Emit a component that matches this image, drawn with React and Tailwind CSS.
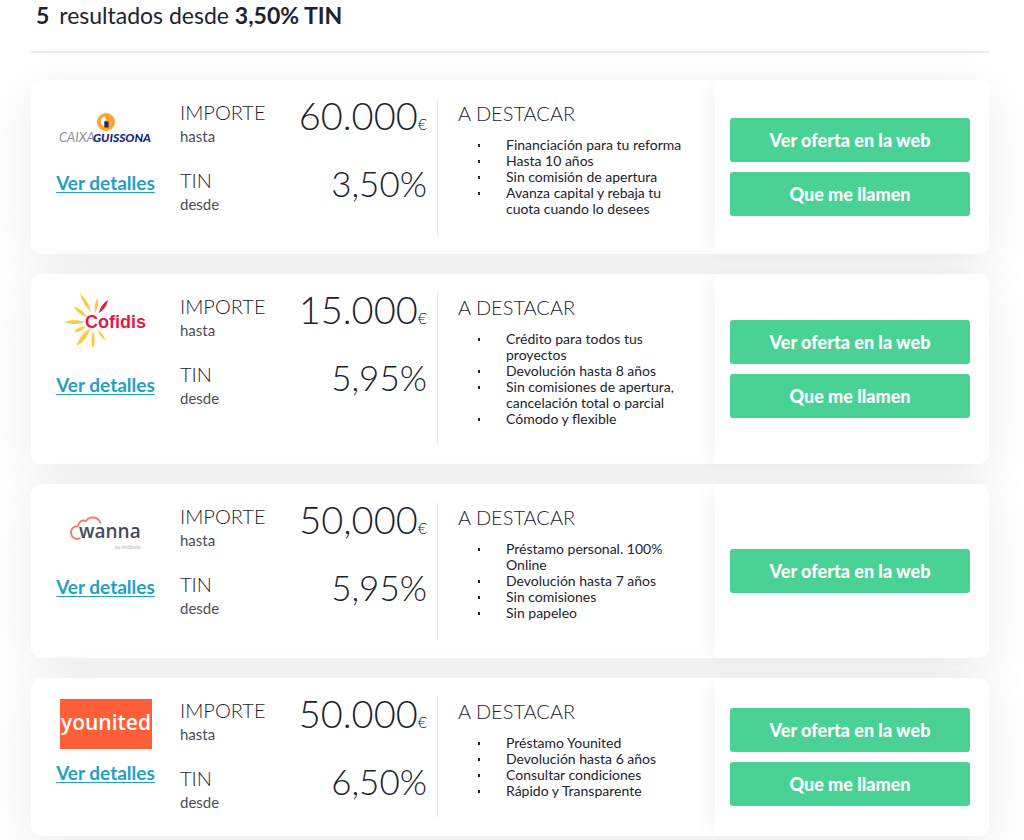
const OFFERS = [
  {
    id: 'caixaguissona',
    name: 'CaixaGuissona',
    Logo: CaixaGuissonaLogo,
    amount: '60.000',
    tin: '3,50%',
    features: [
      'Financiación para tu reforma',
      'Hasta 10 años',
      'Sin comisión de apertura',
      'Avanza capital y rebaja tu cuota cuando lo desees',
    ],
    canCall: true,
  },
  {
    id: 'cofidis',
    name: 'Cofidis',
    Logo: CofidisLogo,
    amount: '15.000',
    tin: '5,95%',
    features: [
      'Crédito para todos tus proyectos',
      'Devolución hasta 8 años',
      'Sin comisiones de apertura, cancelación total o parcial',
      'Cómodo y flexible',
    ],
    canCall: true,
  },
  {
    id: 'wanna',
    name: 'Wanna',
    Logo: WannaLogo,
    amount: '50,000',
    tin: '5,95%',
    features: [
      'Préstamo personal. 100% Online',
      'Devolución hasta 7 años',
      'Sin comisiones',
      'Sin papeleo',
    ],
    canCall: false,
  },
  {
    id: 'younited',
    name: 'Younited',
    Logo: YounitedLogo,
    amount: '50.000',
    tin: '6,50%',
    features: [
      'Préstamo Younited',
      'Devolución hasta 6 años',
      'Consultar condiciones',
      'Rápido y Transparente',
    ],
    canCall: true,
  },
]

function CaixaGuissonaLogo() {
  return (
    <svg width="100" height="54" viewBox="0 0 100 54" role="img" aria-label="CaixaGuissona">
      <circle cx="50" cy="22" r="9" fill="#fba531" />
      <path d="M49 16.500c-3.500 1-5 4-3.800 7.500l2.600 2.600v-5.100l2.200-1.500z" fill="#fff" />
      <path d="M48.500 21.500h4v6h-4z" fill="#14277f" />
      <text x="3" y="42" className="font-['Lato'] text-[13px] italic" fill="#8f9095">CAIXA</text>
      <text x="37" y="42" className="font-['Lato'] text-[12px] font-black italic" fill="#14277f">GUISSONA</text>
    </svg>
  )
}

function CofidisLogo() {
  return (
    <svg width="96" height="58" viewBox="0 0 96 58" role="img" aria-label="Cofidis">
      <g fill="#fccb3e">
        <path d="M22 2c6 4 9.500 11 11 18.500C28.500 15.500 24 9.500 22 2z" />
        <path d="M39.500 6c1.500 4.500.5 10-2.500 14.500C36 15.500 37 10 39.500 6z" />
        <path d="M15.500 14.500c6 1.500 10.500 5.500 13.500 10.500-6-1.500-10.500-5.500-13.500-10.500z" />
        <path d="M6 30c7-2.500 14-2.500 21 0-7 2.500-14 2.500-21 0z" />
        <path d="M16 40c3-4 6.500-5.500 11.500-5.500C24.500 38.500 21 40.500 16 40z" />
        <path d="M18.500 54C20.500 47 25 40.500 32 36.500 30.500 44 25.500 50 18.500 54z" />
        <path d="M35 57c-2.200-6-2-12.500.2-18.500 2.100 6 2 12.500-.2 18.500z" />
        <path d="M47.500 49c-4-3-6.500-7-8-11.500 4.500 3 7 7 8 11.500z" />
      </g>
      <path d="M50 8c-1 5.500-4.200 10-9 13 1-5.500 4.200-10 9-13z" fill="#e2194c" />
      <text x="27" y="36" className="font-['Liberation_Sans'] text-[18px] font-bold" fill="#e2194c">Cofidis</text>
    </svg>
  )
}

function WannaLogo() {
  return (
    <svg width="96" height="54" viewBox="0 0 96 54" role="img" aria-label="Wanna by Andbank">
      <path
        d="M21.500 34.500c-5 1.500-8.500-1.500-8.500-6 0-3.800 3-6.500 7-6.300.2-4.200 4-6.700 8-5.200 3-5 12-5 14.500 2"
        fill="none"
        stroke="#f67d6b"
        strokeWidth="2"
        strokeLinecap="round"
      />
      <text x="21" y="34" className="font-['Open_Sans'] text-[19px] font-semibold" fill="#444b5c">wanna</text>
      <text x="57" y="45" className="font-['Lato'] text-[5px]" fill="#b4b7c0">by Andbank</text>
    </svg>
  )
}

function YounitedLogo() {
  return (
    <svg width="96" height="54" viewBox="0 0 96 54" role="img" aria-label="Younited">
      <rect x="2" y="1" width="92" height="50" fill="#ff5f38" />
      <text x="48" y="32" textAnchor="middle" className="font-['Open_Sans'] text-[21px] font-semibold" fill="#fff">
        younited
      </text>
    </svg>
  )
}

function Figure({ label, hint, children }) {
  return (
    <div className="flex h-[68px] items-start justify-between">
      <dt>
        <span className="block text-[20px] leading-7">{label}</span>
        <span className="block text-[15px] leading-5 font-normal text-[#4a4f59]">{hint}</span>
      </dt>
      <dd className="leading-[34px]">{children}</dd>
    </div>
  )
}

function ActionButton({ children }) {
  return (
    <button
      type="button"
      className="h-11 w-full cursor-pointer rounded-[3px] bg-[#4ad295] text-[18px] font-black text-white hover:bg-[#3cc487]"
    >
      {children}
    </button>
  )
}

function OfferCard({ offer }) {
  const { Logo } = offer

  return (
    <article className="flex rounded-[10px] bg-white shadow-[0_12px_56px_rgba(0,0,0,0.08)]">
      <div className="flex w-[149px] shrink-0 flex-col items-center pt-5">
        <div className="flex h-[54px] items-center">
          <Logo />
        </div>
        <div className="flex flex-1 items-center pb-[42px]">
          <a
            href={`#${offer.id}`}
            aria-label={`Ver detalles de ${offer.name}`}
            className="text-[19px] leading-6 font-bold text-[#1fa1c6] underline underline-offset-2"
          >
            Ver detalles
          </a>
        </div>
      </div>

      <dl className="w-[247px] shrink-0 pt-[18px] font-light">
        <Figure label="IMPORTE" hint="hasta">
          <span className="text-[38px]">{offer.amount}</span>
          <span className="text-[16px]">€</span>
        </Figure>
        <Figure label="TIN" hint="desde">
          <span className="text-[35px]">{offer.tin}</span>
        </Figure>
      </dl>

      <div className="my-[19px] ml-[10px] min-w-0 flex-1 border-l border-[#dfe8f0] pr-5 pb-[18px] pl-5">
        <h2 className="text-[20px] leading-7 font-light">A DESTACAR</h2>
        <ul className="mt-[10px] text-[14px] leading-4">
          {offer.features.map((feature) => (
            <li key={feature} className="flex">
              <span className="mt-[7px] mr-[26px] ml-5 h-[3px] w-[2px] shrink-0 bg-[#1c2330]" />
              {feature}
            </li>
          ))}
        </ul>
      </div>

      <div className="flex w-[274px] shrink-0 flex-col justify-center gap-[10px] rounded-r-[10px] bg-white pr-[19px] pl-[15px] shadow-[-10px_0_20px_-6px_rgba(0,0,0,0.05)]">
        <ActionButton>Ver oferta en la web</ActionButton>
        {offer.canCall && <ActionButton>Que me llamen</ActionButton>}
      </div>
    </article>
  )
}

export default function App() {
  return (
    <main className="overflow-hidden bg-white pr-[35px] pl-[31px] font-['Lato','Open_Sans',sans-serif] text-[#1c2330]">
      <header className="border-b-2 border-[#e9eef2] px-[5px] pb-5">
        <h1 className="text-[23px] leading-[31px]">
          <strong className="mr-1">5</strong> resultados desde <strong>3,50% TIN</strong>
        </h1>
      </header>

      <section className="mt-[27px] space-y-5 pb-6">
        {OFFERS.map((offer) => (
          <OfferCard key={offer.id} offer={offer} />
        ))}
      </section>
    </main>
  )
}
